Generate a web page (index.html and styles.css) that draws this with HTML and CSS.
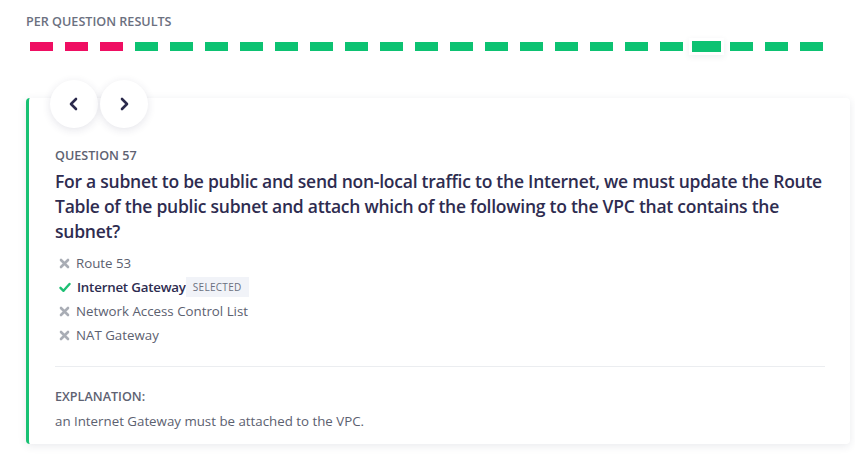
FILE: index.html
```html
<!DOCTYPE html>
<html>
<head>
<meta charset="utf-8">
<link rel="stylesheet" href="styles.css">
</head>
<body>
<div class="page">
  <div class="results-title">PER QUESTION RESULTS</div>
  <div class="dashes">
    <span class="dash wrong"></span><span class="dash wrong"></span><span class="dash wrong"></span>
    <span class="dash right"></span><span class="dash right"></span><span class="dash right"></span><span class="dash right"></span>
    <span class="dash right"></span><span class="dash right"></span><span class="dash right"></span><span class="dash right"></span>
    <span class="dash right"></span><span class="dash right"></span><span class="dash right"></span><span class="dash right"></span>
    <span class="dash right"></span><span class="dash right"></span><span class="dash right"></span><span class="dash right"></span>
    <span class="dash right current"></span><span class="dash right"></span><span class="dash right"></span><span class="dash right"></span>
  </div>
  <div class="card">
    <div class="nav">
      <button class="nav-btn" aria-label="Previous">
        <svg width="14" height="14" viewBox="0 0 14 14"><path d="M9 2 L4 7 L9 12" fill="none" stroke="#2b2a4c" stroke-width="2.6" stroke-linecap="round" stroke-linejoin="round"/></svg>
      </button>
      <button class="nav-btn" aria-label="Next">
        <svg width="14" height="14" viewBox="0 0 14 14"><path d="M5 2 L10 7 L5 12" fill="none" stroke="#2b2a4c" stroke-width="2.6" stroke-linecap="round" stroke-linejoin="round"/></svg>
      </button>
    </div>
    <div class="content">
      <div class="q-label">QUESTION 57</div>
      <div class="q-text">For a subnet to be public and send non-local traffic to the Internet, we must update the Route Table of the public subnet and attach which of the following to the VPC that contains the subnet?</div>
      <ul class="options">
        <li class="option"><svg class="icon" width="11" height="11" viewBox="0 0 11 11"><path d="M2 2 L9 9 M9 2 L2 9" stroke="#a9adb5" stroke-width="2.6" stroke-linecap="round"/></svg><span>Route 53</span></li>
        <li class="option chosen"><svg class="icon" width="12" height="11" viewBox="0 0 12 11"><path d="M1.5 5.8 L4.5 8.8 L10.5 2" fill="none" stroke="#1dbf73" stroke-width="2.4" stroke-linecap="round" stroke-linejoin="round"/></svg><span>Internet Gateway</span><span class="badge">SELECTED</span></li>
        <li class="option"><svg class="icon" width="11" height="11" viewBox="0 0 11 11"><path d="M2 2 L9 9 M9 2 L2 9" stroke="#a9adb5" stroke-width="2.6" stroke-linecap="round"/></svg><span>Network Access Control List</span></li>
        <li class="option"><svg class="icon" width="11" height="11" viewBox="0 0 11 11"><path d="M2 2 L9 9 M9 2 L2 9" stroke="#a9adb5" stroke-width="2.6" stroke-linecap="round"/></svg><span>NAT Gateway</span></li>
      </ul>
      <div class="divider"></div>
      <div class="exp-label">EXPLANATION:</div>
      <div class="exp-text">an Internet Gateway must be attached to the VPC.</div>
    </div>
  </div>
</div>
</body>
</html>
```
FILE: styles.css
```css
* { box-sizing: border-box; }
html, body { margin: 0; padding: 0; background: #ffffff; }
body {
  font-family: "Open Sans", "Noto Sans", sans-serif;
  color: #2e2c50;
  width: 855px;
  height: 468px;
  overflow: hidden;
}
.page { padding: 13px 0 0 26px; }
.results-title {
  font-size: 12.6px;
  font-weight: 600;
  color: #6b7080;
  line-height: 17px;
}
.dashes {
  display: flex;
  align-items: center;
  gap: 12px;
  padding: 6px 0 0 4px;
  height: 26px;
}
.dash {
  display: block;
  width: 23px;
  height: 9px;
  flex: none;
}
.dash.wrong { background: #ef0e62; }
.dash.right { background: #0cc272; }
.dash.current {
  width: 29px;
  height: 11px;
  margin: 0 -3px;
  outline: 3px solid #ffffff;
  box-shadow: 0 2px 6px 3px rgba(40, 45, 80, 0.08);
}
.card {
  display: flow-root;
  margin-top: 42px;
  width: 824px;
  background: #ffffff;
  border-left: 3px solid #18c173;
  border-radius: 4px;
  box-shadow: 0 2px 8px rgba(40, 45, 80, 0.10);
  padding-bottom: 14px;
}
.nav {
  display: flex;
  gap: 2px;
  padding-left: 21px;
  margin-top: -18px;
}
.nav-btn {
  width: 48px;
  height: 48px;
  border-radius: 50%;
  border: none;
  background: #ffffff;
  box-shadow: 0 2px 8px rgba(40, 45, 80, 0.12);
  display: flex;
  align-items: center;
  justify-content: center;
  padding: 0;
}
.content { padding: 19px 26px 0 26px; }
.q-label {
  font-size: 12.6px;
  font-weight: 600;
  color: #5e6272;
  line-height: 17px;
}
.q-text {
  margin-top: 5px;
  font-size: 17.5px;
  font-weight: 600;
  letter-spacing: -0.25px;
  line-height: 25px;
  color: #2e2c50;
}
.options {
  list-style: none;
  margin: 7px 0 0 0;
  padding: 0 0 0 4px;
}
.option {
  display: flex;
  align-items: center;
  height: 24px;
  font-size: 13.3px;
  color: #5c6170;
}
.option .icon { margin-right: 6px; flex: none; }
.option.chosen { color: #2e2c50; font-weight: 600; letter-spacing: -0.2px; }
.badge {
  margin-left: 0px;
  padding: 0 7px;
  height: 20px;
  line-height: 20px;
  background: #f1f3f8;
  font-size: 10px;
  font-weight: 400;
  color: #6b7080;
  letter-spacing: 0.3px;
}
.divider {
  margin-top: 19px;
  height: 1px;
  background: #ebedf0;
  width: 770px;
}
.exp-label {
  margin-top: 21px;
  font-size: 12.6px;
  font-weight: 600;
  color: #5e6272;
  line-height: 17px;
}
.exp-text {
  margin-top: 7px;
  font-size: 13.3px;
  color: #5c6170;
  line-height: 18px;
}
```
